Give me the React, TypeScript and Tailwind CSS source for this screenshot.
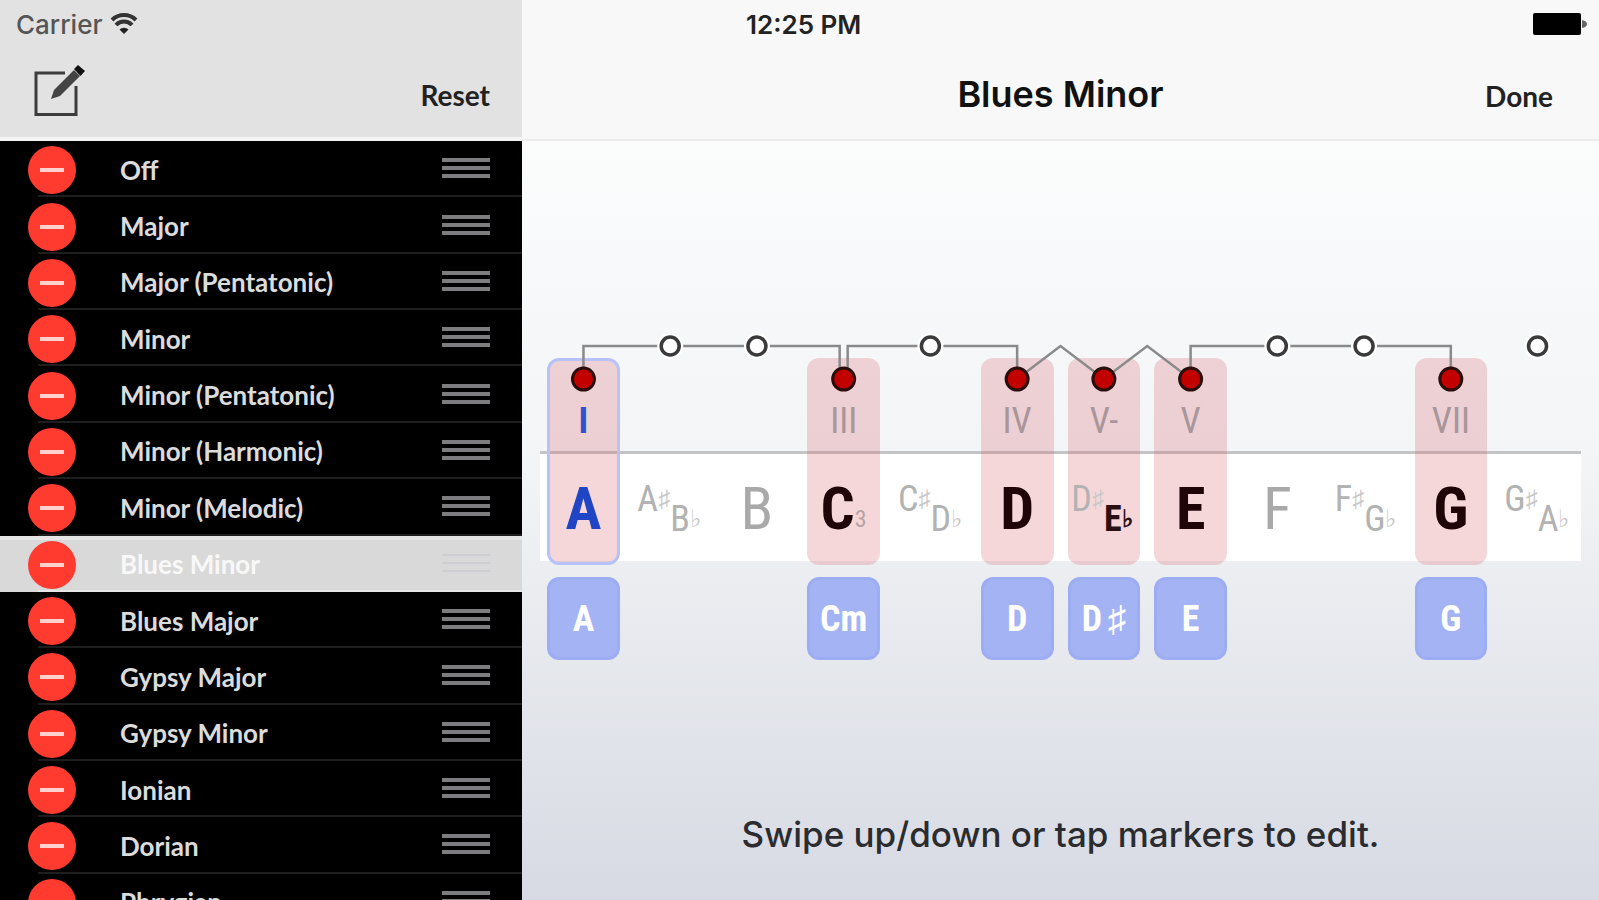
import { clsx } from "clsx";

type Accidental = { sharp: string; flat: string; flatActive?: boolean };

type Step = {
  note: string | Accidental;
  degree?: string;
  chord?: string;
  chordSharp?: boolean;
  mark?: string;
  root?: boolean;
};

const SCALES = [
  "Off",
  "Major",
  "Major (Pentatonic)",
  "Minor",
  "Minor (Pentatonic)",
  "Minor (Harmonic)",
  "Minor (Melodic)",
  "Blues Minor",
  "Blues Major",
  "Gypsy Major",
  "Gypsy Minor",
  "Ionian",
  "Dorian",
  "Phrygian",
];

const SELECTED = "Blues Minor";

const STEPS: Step[] = [
  { note: "A", degree: "I", chord: "A", root: true },
  { note: { sharp: "A", flat: "B" } },
  { note: "B" },
  { note: "C", degree: "III", chord: "Cm", mark: "3" },
  { note: { sharp: "C", flat: "D" } },
  { note: "D", degree: "IV", chord: "D" },
  { note: { sharp: "D", flat: "E", flatActive: true }, degree: "V-", chord: "D", chordSharp: true },
  { note: "E", degree: "V", chord: "E" },
  { note: "F" },
  { note: { sharp: "F", flat: "G" } },
  { note: "G", degree: "VII", chord: "G" },
  { note: { sharp: "G", flat: "A" } },
];

const COL = 1040 / 12;
const cx = (i: number) => COL * (i + 0.5);

// whole-step runs are square brackets, half steps are little peaks
const WIRES = [
  `M${cx(0)} 33V0H${cx(3) - 4}V33`,
  `M${cx(3) + 4} 33V0H${cx(5)}V33`,
  `M${cx(5)} 33L${cx(5.5)} 0L${cx(6)} 33L${cx(6.5)} 0L${cx(7)} 33`,
  `M${cx(7)} 33V0H${cx(10)}V33`,
];

const condensed = "font-['Roboto_Condensed','Liberation_Sans_Narrow',sans-serif]";

function ComposeIcon() {
  return (
    <svg viewBox="0 0 54 54" className="h-[54px] w-[54px]" fill="none" aria-hidden="true">
      <path d="M33 9H4V50.500H44V22" stroke="#3c3c3c" strokeWidth="3" />
      <path d="M19 35L22 26L42 6L48 12L28 32Z" fill="#444" />
      <path d="M42 5L46 1L53 7L48.500 12Z" fill="#111" />
    </svg>
  );
}

function WifiIcon() {
  return (
    <svg viewBox="0 0 28 22" className="h-[22px] w-7" fill="none" aria-hidden="true">
      <path d="M2 7A17 17 0 0 1 26 7" stroke="#333" strokeWidth="4" />
      <path d="M6 12A11 11 0 0 1 22 12" stroke="#333" strokeWidth="4" />
      <path d="M14 21L9.500 16.500A6.500 6.500 0 0 1 18.500 16.500Z" fill="#222" />
    </svg>
  );
}

function BatteryIcon() {
  return (
    <svg viewBox="0 0 54 22" className="h-[22px] w-[54px]" aria-hidden="true">
      <rect width="48" height="22" rx="2" fill="#000" />
      <path d="M49 7Q54 8 54 11T49 15Z" fill="#666" />
    </svg>
  );
}

function ScaleRow({ name }: { name: string }) {
  const selected = name === SELECTED;
  const bar = clsx("bg-current", selected ? "h-0.5" : "h-1");
  return (
    <li className={clsx("flex items-stretch pl-[38px]", selected && "border-t-4 border-[#e6e6e6] bg-[#d9d9d9]")}>
      <div
        className={clsx(
          "flex grow items-center border-b-2 pr-8",
          selected ? "border-[#e6e6e6]" : "border-[#1e1e1e] pt-1"
        )}
      >
        <button
          aria-label={`Delete ${name}`}
          className="-ml-[10px] grid size-12 shrink-0 place-items-center rounded-full bg-[#ff3b30]"
        >
          <span className="h-1 w-6 bg-[#ffd0cc]" />
        </button>
        <button className={clsx("grow pl-11 text-left", selected ? "text-[#f8f8f8]" : "text-[#dcdcdc]")}>
          {name}
        </button>
        <span
          className={clsx(
            "grid w-12 shrink-0 pb-1",
            selected ? "gap-1.5 text-[#cfcfd3]" : "gap-1 text-[#7d7d7f]"
          )}
        >
          <span className={bar} />
          <span className={bar} />
          <span className={bar} />
        </span>
      </div>
    </li>
  );
}

function NoteLabel({ step }: { step: Step }) {
  const { note } = step;
  if (typeof note === "string") {
    return (
      <span
        className={clsx(
          "flex h-[60px] items-end justify-center text-[60px] leading-[60px]",
          step.root ? "font-bold text-[#1f45c4]" : step.degree ? "font-bold text-[#1f0508]" : "text-[#a9a9a9]"
        )}
      >
        {note}
        {step.mark && (
          <sub className="bottom-0 text-2xl leading-10 font-normal text-[#b9a3a6]">{step.mark}</sub>
        )}
      </span>
    );
  }
  return (
    <span className="grid h-[60px] grid-cols-2 text-4xl leading-10 text-[#b2b2b2]">
      <span className="flex justify-end">
        {note.sharp}
        <span className="text-2xl leading-10 text-[#c8c8c8]">♯</span>
      </span>
      <span className={clsx("flex pt-5", note.flatActive && "font-bold text-[#2b1013]")}>
        {note.flat}
        <span className={clsx("text-2xl leading-10", !note.flatActive && "text-[#c8c8c8]")}>♭</span>
      </span>
    </span>
  );
}

function StepColumn({ step }: { step: Step }) {
  return (
    <div className={clsx("flex flex-col gap-3 px-[7px]", condensed)}>
      <div
        className={clsx(
          "flex h-[207px] flex-col rounded-xl border-[3px] pt-10",
          step.degree && "bg-[#d8606a]/25",
          step.root ? "border-[#b6c2f8]" : "border-transparent"
        )}
      >
        <span
          className={clsx(
            "h-10 text-center text-4xl leading-10",
            step.root ? "font-bold text-[#2f53cc]" : "text-[#a8969b]"
          )}
        >
          {step.degree}
        </span>
        <div className="pt-[38px]">
          <NoteLabel step={step} />
        </div>
      </div>
      {step.chord && (
        <button className="flex h-[83px] items-center justify-center gap-1.5 rounded-xl border-[3px] border-[#9dadf3] bg-[#a4b3f3] text-4xl font-bold text-white">
          {step.chord}
          {step.chordSharp && <span>♯</span>}
        </button>
      )}
    </div>
  );
}

function Markers() {
  return (
    <svg viewBox="0 -12 1040 60" className="w-full [grid-area:1/1]" fill="none" aria-hidden="true">
      {WIRES.map((d) => (
        <path key={d} d={d} stroke="#8a8a8a" strokeWidth="2.5" />
      ))}
      {STEPS.map((step, i) =>
        step.degree ? (
          <circle key={i} cx={cx(i)} cy="33" r="11" fill="#c20000" stroke="#2a0d0d" strokeWidth="3" />
        ) : (
          <g key={i}>
            <circle cx={cx(i)} cy="0" r="13" fill="#fff" />
            <circle cx={cx(i)} cy="0" r="9" fill="#fff" stroke="#3a3a3a" strokeWidth="3.5" />
          </g>
        )
      )}
    </svg>
  );
}

export default function App() {
  return (
    <div className="flex h-screen overflow-hidden font-['Inter',sans-serif]">
      <aside className="flex w-[522px] shrink-0 flex-col bg-black font-['Lato',sans-serif] text-[26px] font-bold">
        <header className="flex h-[141px] shrink-0 flex-col border-b-4 border-[#f4f4f4] bg-[#e2e2e2] px-4">
          <div className="flex h-12 items-center gap-2 font-['Inter',sans-serif] text-[26px] font-medium text-[#555]">
            Carrier
            <WifiIcon />
          </div>
          <div className="flex grow items-center justify-between px-4 pb-1">
            <button aria-label="Edit scales">
              <ComposeIcon />
            </button>
            <button className="pt-2 text-[28px] text-[#222]">Reset</button>
          </div>
        </header>
        <ul className="grid h-[789px] shrink-0 auto-rows-fr">
          {SCALES.map((name) => (
            <ScaleRow key={name} name={name} />
          ))}
        </ul>
      </aside>

      <main className="flex min-w-0 grow flex-col bg-linear-to-b from-white via-[#f3f5f6] to-[#d7dae3]">
        <header className="flex h-[141px] shrink-0 flex-col border-b-2 border-[#ececec] bg-[#f8f8f8]">
          <div className="flex h-12 items-center justify-between pr-3 pl-[224px]">
            <span className="text-[26px] font-semibold text-[#222]">12:25 PM</span>
            <BatteryIcon />
          </div>
          <div className="grid grow grid-cols-[1fr_auto_1fr] items-center">
            <h1 className="col-start-2 text-[36px] font-semibold text-[#111]">Blues Minor</h1>
            <button className="justify-self-end pt-1 pr-[46px] font-['Lato',sans-serif] text-[28px] font-bold text-[#222]">
              Done
            </button>
          </div>
        </header>

        <section className="mx-[18px] mt-[193px] grid items-start">
          <div className="mt-[117px] h-[110px] border-t-[3px] border-[#c2c4c6] bg-white [grid-area:1/1]" />
          <div className="mt-6 grid grid-cols-12 [grid-area:1/1]">
            {STEPS.map((step, i) => (
              <StepColumn key={i} step={step} />
            ))}
          </div>
          <Markers />
        </section>

        <p className="mt-auto pb-10 text-center text-[35px] font-medium text-[#2a2c30]">
          Swipe up/down or tap markers to edit.
        </p>
      </main>
    </div>
  );
}
